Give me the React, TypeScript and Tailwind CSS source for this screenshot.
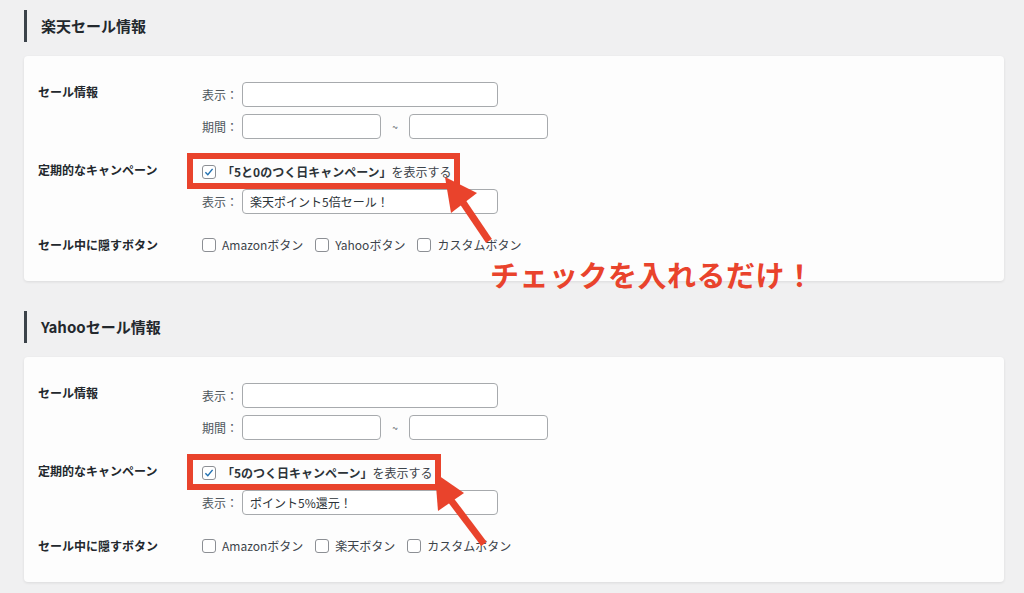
const RED = "#e9432c";

const CheckBox = ({ checked = false }: { checked?: boolean }) => (
  <span className="flex h-[14px] w-[14px] shrink-0 items-center justify-center rounded-[3px] border border-[#8c8f94] bg-white">
    {checked && (
      <svg viewBox="0 0 16 16" className="h-[12px] w-[12px]">
        <path d="M3.2 8.4 6.4 11.6 12.8 3.8" fill="none" stroke="#2271b1" strokeWidth="1.9" />
      </svg>
    )}
  </span>
);

const Field = ({ width, value = "" }: { width: string; value?: string }) => (
  <input
    readOnly
    defaultValue={value}
    className={`h-[25px] ${width} rounded-[4px] border border-[#a7aaad] bg-white px-[7px] text-[12px] text-[#2c3338] outline-none`}
  />
);

type CardProps = {
  title: string;
  campaign: string;
  display: string;
  buttons: string[];
};

const SaleCard = ({ title, campaign, display, buttons }: CardProps) => {
  return (
    <section>
      <h2 className="flex h-[32px] items-center border-l-[3px] border-[#3c434a] pl-[14px] text-[15px] font-bold text-[#23282d]">
        {title}
      </h2>
      <div className="mt-[14px] rounded-[4px] bg-[#fdfdfd] px-[14px] pb-[26px] pt-[26px] shadow-[0_1px_3px_rgba(0,0,0,0.09)]">
        {/* セール情報 */}
        <div className="flex">
          <div className="w-[164px] pt-[1px] text-[12px] font-bold leading-[18px] text-[#23282d]">セール情報</div>
          <div className="flex flex-col gap-[7px]">
            <div className="flex items-center">
              <span className="w-[40px] text-[12px] text-[#50575e]">表示：</span>
              <Field width="w-[256px]" />
            </div>
            <div className="flex items-center">
              <span className="w-[40px] text-[12px] text-[#50575e]">期間：</span>
              <Field width="w-[139px]" />
              <span className="w-[28px] text-center text-[10px] text-[#50575e]">~</span>
              <Field width="w-[139px]" />
            </div>
          </div>
        </div>

        {/* 定期的なキャンペーン */}
        <div className="mt-[22px] flex">
          <div className="w-[164px] text-[12px] font-bold leading-[18px] text-[#23282d]">定期的なキャンペーン</div>
          <div className="flex flex-col gap-[6px]">
            <label className="relative flex h-[22px] items-center gap-[6px] self-start text-[12px] text-[#3c434a]">
              <CheckBox checked />
              <span>
                <b className="font-bold text-[#2c3338]">{campaign}</b>を表示する
              </span>
              <span className="pointer-events-none absolute -bottom-[6px] -left-[15px] -right-[8px] -top-[8px] border-[6px] border-[#e9432c]" />
            </label>
            <div className="flex items-center">
              <span className="w-[40px] text-[12px] text-[#50575e]">表示：</span>
              <Field width="w-[256px]" value={display} />
            </div>
          </div>
        </div>

        {/* セール中に隠すボタン */}
        <div className="mt-[21px] flex items-center">
          <div className="w-[164px] text-[12px] font-bold leading-[20px] text-[#23282d]">セール中に隠すボタン</div>
          <div className="flex items-center gap-[12px]">
            {buttons.map((b) => (
              <label key={b} className="flex items-center gap-[6px] text-[12px] leading-[20px] text-[#3c434a]">
                <CheckBox />
                {b}
              </label>
            ))}
          </div>
        </div>
      </div>
    </section>
  );
};

export default function App() {
  return (
    <div className="relative h-[593px] w-[1024px] overflow-hidden bg-[#f0f0f1] font-['Noto_Sans_CJK_JP',sans-serif]">
      <div className="flex flex-col gap-[30px] pl-[24px] pr-[20px] pt-[10px]">
        <SaleCard
          title="楽天セール情報"
          campaign="「5と0のつく日キャンペーン」"
          display="楽天ポイント5倍セール！"
          buttons={["Amazonボタン", "Yahooボタン", "カスタムボタン"]}
        />
        <SaleCard
          title="Yahooセール情報"
          campaign="「5のつく日キャンペーン」"
          display="ポイント5%還元！"
          buttons={["Amazonボタン", "楽天ボタン", "カスタムボタン"]}
        />
      </div>

      {/* annotation arrows */}
      <svg className="pointer-events-none absolute left-0 top-0 h-[593px] w-[1024px]" viewBox="0 0 1024 593">
        <polygon points="445,177 477,193 451,213" fill={RED} />
        <line x1="462" y1="201" x2="489" y2="241" stroke={RED} strokeWidth="7" />
        <polygon points="435,473 464,493 438,511" fill={RED} />
        <line x1="450" y1="499" x2="484" y2="544" stroke={RED} strokeWidth="7" />
      </svg>
      <div className="absolute left-[490px] top-[254px] text-[29px] font-bold leading-[40px] tracking-[0.5px] text-[#e9432c]">
        チェックを入れるだけ！
      </div>
    </div>
  );
}
